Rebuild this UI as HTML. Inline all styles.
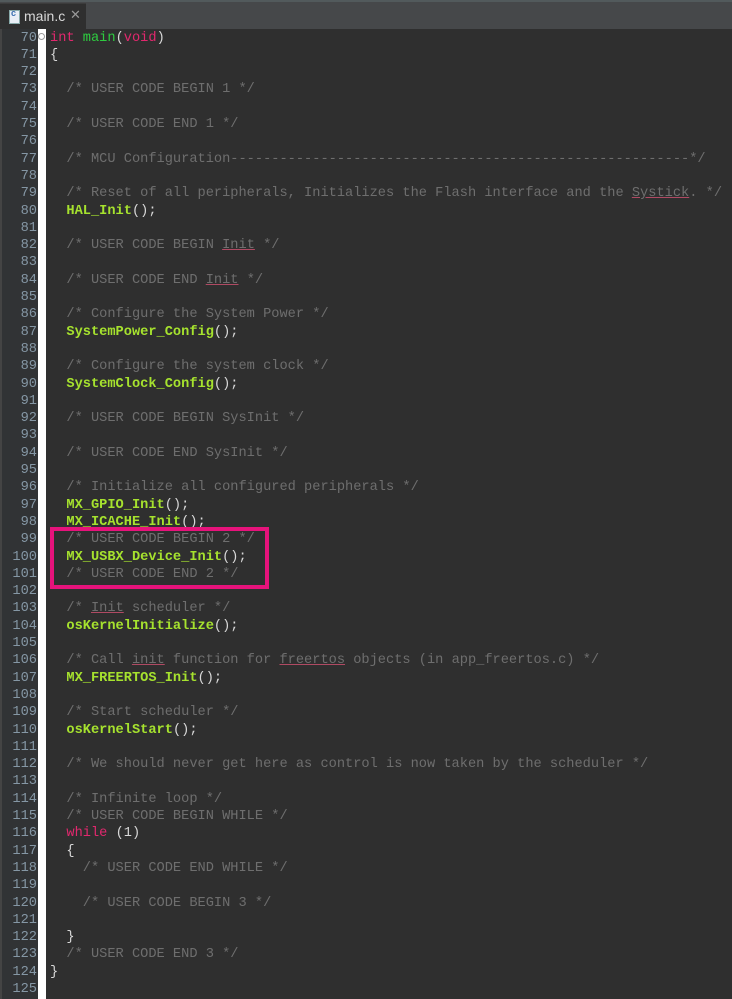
<!DOCTYPE html>
<html><head><meta charset="utf-8"><style>
html,body{margin:0;padding:0;background:#2f2f2f;width:732px;height:999px;overflow:hidden;position:relative}
.tabbar{position:absolute;left:0;top:0;width:732px;height:29px;background:#46484a;border-top:2px solid #525a5c;box-sizing:border-box}
.tab{position:absolute;left:0;top:3px;width:86px;height:26px;background:#2f2f2f;border-top:1px solid #3c3c3c;font:14px "Liberation Sans",sans-serif;color:#d8d8d8}
.tab .ic{position:absolute;left:9px;top:6px;width:9px;height:12px;background:#e8eef5;border:1px solid #8aa}
.tab .ic:after{content:"c";position:absolute;left:1px;top:-3px;font:bold 9px sans-serif;color:#3a6fb0}
.tab .t{position:absolute;left:24px;top:4px}
.tab .x{position:absolute;left:70px;top:3px;color:#999;font-size:13px}
.gut{position:absolute;left:0;top:29px;width:38px;height:970px;background:#313335;border-left:2px solid #444;box-sizing:border-box}
.strip{position:absolute;left:38px;top:29px;width:8px;height:970px;background:#fff}
.code{position:absolute;left:0;top:29.5px;width:732px;font:13.67px/17.3px "Liberation Mono",monospace;color:#d8d8d8}
.ln{position:absolute;left:0;width:37px;text-align:right;color:#8597a5;white-space:pre}
.tx{position:absolute;left:50px;white-space:pre}
.c{color:#6e6e6e}
.k{color:#e2286e}
.m{color:#2ecc40}
.f{color:#a6e22e;font-weight:bold}
.u{text-decoration:underline;text-decoration-color:#b04a63}
.box{position:absolute;left:50px;top:527px;width:219px;height:62px;border:4px solid #e6137b;box-sizing:border-box}
</style></head><body>
<div class="tabbar"></div>
<div class="tab"><span class="ic"></span><span class="t">main.c</span><span class="x">✕</span></div>
<div class="gut"></div>
<div class="strip"></div>
<div class="code"><div class="ln" style="top:0">70</div><div class="tx" style="top:0"><span class="k">int</span> <span class="m">main</span>(<span class="k">void</span>)</div>
<div class="ln" style="top:17.3px">71</div><div class="tx" style="top:17.3px">{</div>
<div class="ln" style="top:34.6px">72</div>
<div class="ln" style="top:51.9px">73</div><div class="tx c" style="top:51.9px">  /* USER CODE BEGIN 1 */</div>
<div class="ln" style="top:69.2px">74</div>
<div class="ln" style="top:86.5px">75</div><div class="tx c" style="top:86.5px">  /* USER CODE END 1 */</div>
<div class="ln" style="top:103.8px">76</div>
<div class="ln" style="top:121.1px">77</div><div class="tx c" style="top:121.1px">  /* MCU Configuration--------------------------------------------------------*/</div>
<div class="ln" style="top:138.4px">78</div>
<div class="ln" style="top:155.7px">79</div><div class="tx c" style="top:155.7px">  /* Reset of all peripherals, Initializes the Flash interface and the <span class="u">Systick</span>. */</div>
<div class="ln" style="top:173px">80</div><div class="tx" style="top:173px">  <span class="f">HAL_Init</span>();</div>
<div class="ln" style="top:190.3px">81</div>
<div class="ln" style="top:207.6px">82</div><div class="tx c" style="top:207.6px">  /* USER CODE BEGIN <span class="u">Init</span> */</div>
<div class="ln" style="top:224.9px">83</div>
<div class="ln" style="top:242.2px">84</div><div class="tx c" style="top:242.2px">  /* USER CODE END <span class="u">Init</span> */</div>
<div class="ln" style="top:259.5px">85</div>
<div class="ln" style="top:276.8px">86</div><div class="tx c" style="top:276.8px">  /* Configure the System Power */</div>
<div class="ln" style="top:294.1px">87</div><div class="tx" style="top:294.1px">  <span class="f">SystemPower_Config</span>();</div>
<div class="ln" style="top:311.4px">88</div>
<div class="ln" style="top:328.7px">89</div><div class="tx c" style="top:328.7px">  /* Configure the system clock */</div>
<div class="ln" style="top:346px">90</div><div class="tx" style="top:346px">  <span class="f">SystemClock_Config</span>();</div>
<div class="ln" style="top:363.3px">91</div>
<div class="ln" style="top:380.6px">92</div><div class="tx c" style="top:380.6px">  /* USER CODE BEGIN SysInit */</div>
<div class="ln" style="top:397.9px">93</div>
<div class="ln" style="top:415.2px">94</div><div class="tx c" style="top:415.2px">  /* USER CODE END SysInit */</div>
<div class="ln" style="top:432.5px">95</div>
<div class="ln" style="top:449.8px">96</div><div class="tx c" style="top:449.8px">  /* Initialize all configured peripherals */</div>
<div class="ln" style="top:467.1px">97</div><div class="tx" style="top:467.1px">  <span class="f">MX_GPIO_Init</span>();</div>
<div class="ln" style="top:484.4px">98</div><div class="tx" style="top:484.4px">  <span class="f">MX_ICACHE_Init</span>();</div>
<div class="ln" style="top:501.7px">99</div><div class="tx c" style="top:501.7px">  /* USER CODE BEGIN 2 */</div>
<div class="ln" style="top:519px">100</div><div class="tx" style="top:519px">  <span class="f">MX_USBX_Device_Init</span>();</div>
<div class="ln" style="top:536.3px">101</div><div class="tx c" style="top:536.3px">  /* USER CODE END 2 */</div>
<div class="ln" style="top:553.6px">102</div>
<div class="ln" style="top:570.9px">103</div><div class="tx c" style="top:570.9px">  /* <span class="u">Init</span> scheduler */</div>
<div class="ln" style="top:588.2px">104</div><div class="tx" style="top:588.2px">  <span class="f">osKernelInitialize</span>();</div>
<div class="ln" style="top:605.5px">105</div>
<div class="ln" style="top:622.8px">106</div><div class="tx c" style="top:622.8px">  /* Call <span class="u">init</span> function for <span class="u">freertos</span> objects (in app_freertos.c) */</div>
<div class="ln" style="top:640.1px">107</div><div class="tx" style="top:640.1px">  <span class="f">MX_FREERTOS_Init</span>();</div>
<div class="ln" style="top:657.4px">108</div>
<div class="ln" style="top:674.7px">109</div><div class="tx c" style="top:674.7px">  /* Start scheduler */</div>
<div class="ln" style="top:692px">110</div><div class="tx" style="top:692px">  <span class="f">osKernelStart</span>();</div>
<div class="ln" style="top:709.3px">111</div>
<div class="ln" style="top:726.6px">112</div><div class="tx c" style="top:726.6px">  /* We should never get here as control is now taken by the scheduler */</div>
<div class="ln" style="top:743.9px">113</div>
<div class="ln" style="top:761.2px">114</div><div class="tx c" style="top:761.2px">  /* Infinite loop */</div>
<div class="ln" style="top:778.5px">115</div><div class="tx c" style="top:778.5px">  /* USER CODE BEGIN WHILE */</div>
<div class="ln" style="top:795.8px">116</div><div class="tx" style="top:795.8px">  <span class="k">while</span> (1)</div>
<div class="ln" style="top:813.1px">117</div><div class="tx" style="top:813.1px">  {</div>
<div class="ln" style="top:830.4px">118</div><div class="tx c" style="top:830.4px">    /* USER CODE END WHILE */</div>
<div class="ln" style="top:847.7px">119</div>
<div class="ln" style="top:865px">120</div><div class="tx c" style="top:865px">    /* USER CODE BEGIN 3 */</div>
<div class="ln" style="top:882.3px">121</div>
<div class="ln" style="top:899.6px">122</div><div class="tx" style="top:899.6px">  }</div>
<div class="ln" style="top:916.9px">123</div><div class="tx c" style="top:916.9px">  /* USER CODE END 3 */</div>
<div class="ln" style="top:934.2px">124</div><div class="tx" style="top:934.2px">}</div>
<div class="ln" style="top:951.5px">125</div></div>
<div style="position:absolute;left:38px;top:33px;width:7px;height:7px;border:1px solid #999;border-radius:50%;box-sizing:border-box;background:#fff"></div>
<div class="box"></div>
</body></html>
